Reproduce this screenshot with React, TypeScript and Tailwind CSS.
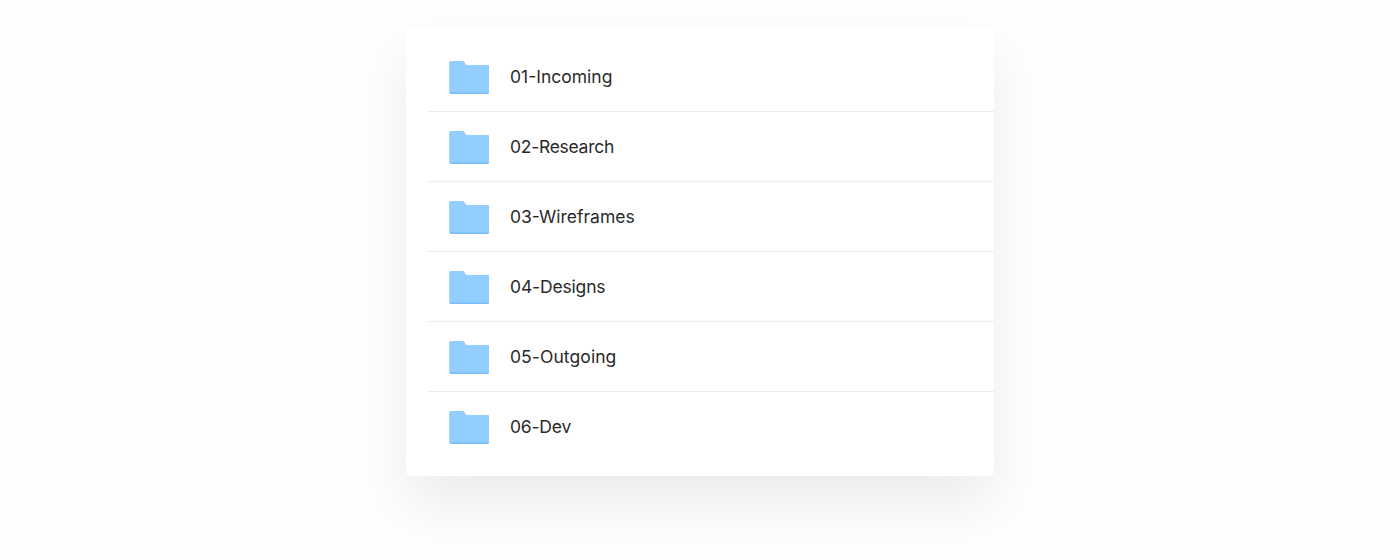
const folders = [
  { name: "01-Incoming", tracking: "tracking-[0px]" },
  { name: "02-Research", tracking: "tracking-[-0.28px]" },
  { name: "03-Wireframes", tracking: "tracking-[0px]" },
  { name: "04-Designs", tracking: "tracking-[-0.16px]" },
  { name: "05-Outgoing", tracking: "tracking-[0.08px]" },
  { name: "06-Dev", tracking: "tracking-[-0.2px]" },
];

export default function App() {
  return (
    <main className="flex h-[560px] items-start justify-center overflow-hidden bg-[#fefefe] pt-7">
      <ul className="flex h-[448px] w-[588px] flex-col rounded-[5px] bg-white pt-[14px] pl-[21px] shadow-[0_28px_56px_rgba(0,0,0,0.075)]">
        {folders.map(({ name, tracking }) => (
          <li key={name} className="flex h-[70px] items-center border-b border-[#ededed] pl-[22px] last:border-transparent">
            <svg width="41" height="34" viewBox="0 0 41 34" className="mt-[2px] shrink-0">
              <path d="M.5 1.5Q.5 0 2 0H13Q14.5 0 15.2 1L16.2 3Q16.7 4 18 4H38.5Q40 4 40 5.5V31.5Q40 33 38.5 33H2Q.5 33 .5 31.5Z" fill="#78bdfb" />
              <path d="M.5 1.5Q.5 0 2 0H13Q14.5 0 15.2 1L16.2 3Q16.7 4 18 4H38.5Q40 4 40 5.5V30Q40 31.5 38.5 31.5H2Q.5 31.5 .5 30Z" fill="#92ceff" />
            </svg>
            <span className={`ml-5 pt-[2px] font-['Inter',sans-serif] text-[17.5px] text-[#2a2a2a] ${tracking}`}>{name}</span>
          </li>
        ))}
      </ul>
    </main>
  );
}
